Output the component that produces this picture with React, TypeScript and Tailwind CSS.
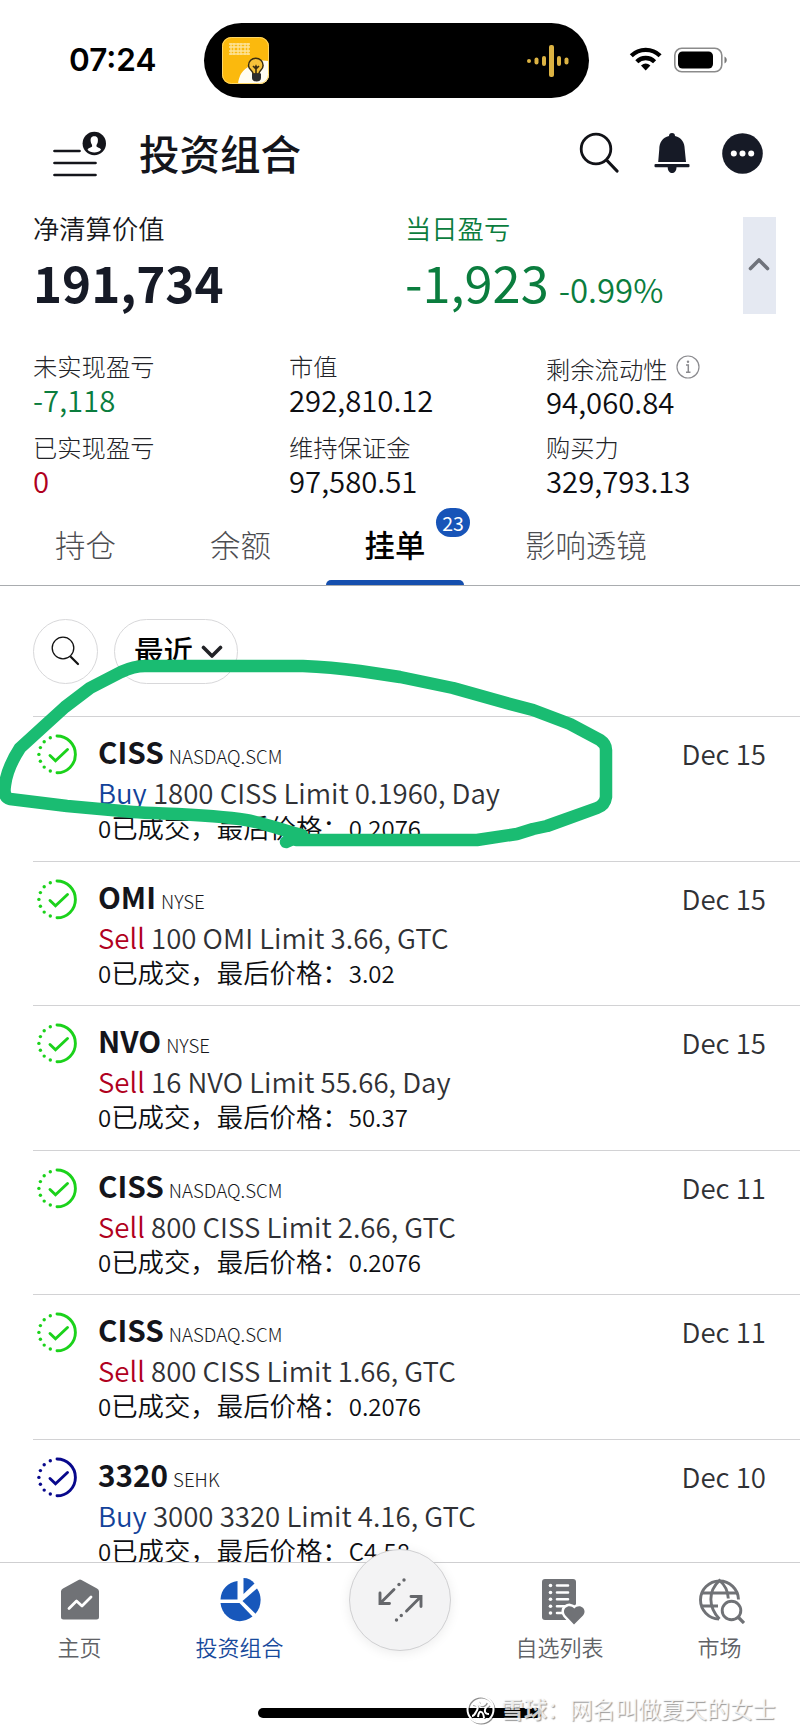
import type { FC } from "react";

type Stat = {
	label: string;
	value: string;
	color?: string;
	info?: boolean;
};

type Order = {
	symbol: string;
	exchange: string;
	side: "Buy" | "Sell";
	detail: string;
	last: string;
	date: string;
	color: string;
};

const stats: Stat[] = [
	{ label: "未实现盈亏", value: "-7,118", color: "text-[#0b7d3e]" },
	{ label: "市值", value: "292,810.12" },
	{ label: "剩余流动性", value: "94,060.84", info: true },
	{ label: "已实现盈亏", value: "0", color: "text-[#b00020]" },
	{ label: "维持保证金", value: "97,580.51" },
	{ label: "购买力", value: "329,793.13" },
];

const GREEN = "#1bd21b";
const NAVY = "#08088c";

const orders: Order[] = [
	{ symbol: "CISS", exchange: "NASDAQ.SCM", side: "Buy", detail: "1800 CISS Limit 0.1960, Day", last: "0.2076", date: "Dec 15", color: GREEN },
	{ symbol: "OMI", exchange: "NYSE", side: "Sell", detail: "100 OMI Limit 3.66, GTC", last: "3.02", date: "Dec 15", color: GREEN },
	{ symbol: "NVO", exchange: "NYSE", side: "Sell", detail: "16 NVO Limit 55.66, Day", last: "50.37", date: "Dec 15", color: GREEN },
	{ symbol: "CISS", exchange: "NASDAQ.SCM", side: "Sell", detail: "800 CISS Limit 2.66, GTC", last: "0.2076", date: "Dec 11", color: GREEN },
	{ symbol: "CISS", exchange: "NASDAQ.SCM", side: "Sell", detail: "800 CISS Limit 1.66, GTC", last: "0.2076", date: "Dec 11", color: GREEN },
	{ symbol: "3320", exchange: "SEHK", side: "Buy", detail: "3000 3320 Limit 4.16, GTC", last: "C4.58", date: "Dec 10", color: NAVY },
];

const StatusBar: FC = () => (
	<div className="flex h-[121px] shrink-0 items-center">
		<div className="w-[204px] pb-[2px] pl-[69px] font-['Inter',sans-serif] text-[31.500px] font-semibold leading-none text-black">
			07:24
		</div>
		<div className="flex h-[75px] w-[385px] items-center justify-between rounded-full bg-black pl-[18px] pr-[19px]">
			<svg width="47" height="47" viewBox="0 0 47 47">
				<defs>
					<clipPath id="appIcon">
						<rect width="47" height="47" rx="9" />
					</clipPath>
				</defs>
				<g clipPath="url(#appIcon)">
					<rect width="47" height="47" fill="#fbb90d" />
					<path d="M16 47C18 32 26 31 30 27C34 23 40 23 47 24V47Z" fill="#fffdf2" />
					<g stroke="#fde49a" strokeWidth="1.300" fill="none">
						<path d="M7 7H28M7 10H28M7 14H28M7 17H28" />
						<path d="M9 6V18M12 6V18M16 6V18M19 6V18M23 6V18M26 6V18" />
					</g>
					<path d="M31 37C31 33 26.500 33 26.500 28.500A7.300 7.300 0 0 1 41.100 28.500C41.100 33 37 33 37 37Z" fill="#f6c23a" stroke="#3a2d10" strokeWidth="1.500" />
					<path d="M31 29L33 31L34 29L35 31L37 29M34 31V37" fill="none" stroke="#3a2d10" strokeWidth="1.600" />
					<path d="M30 36.500H39V41C39 43.500 37 44.500 34.500 44.500S30 43.500 30 41Z" fill="#2d2d2d" />
				</g>
				<rect x=".5" y=".5" width="46" height="46" rx="9" fill="none" stroke="#ffd766" />
			</svg>
			<svg width="44" height="34" viewBox="0 0 44 34" fill="#dcb343">
				<circle cx="3" cy="17" r="2" />
				<rect x="8.500" y="13.500" width="4" height="7" rx="2" />
				<rect x="16" y="12" width="4" height="10" rx="2" />
				<rect x="23" y="1" width="5" height="32" rx="2" />
				<rect x="31" y="12" width="4" height="10" rx="2" />
				<rect x="38.500" y="13.500" width="4" height="7" rx="2" />
			</svg>
		</div>
		<svg className="mb-[3px] ml-[40px]" width="34" height="26" viewBox="0 0 34 26" fill="none" stroke="#000" strokeWidth="4.300">
			<path d="M2.300 9.700A20.500 20.500 0 0 1 31.100 9.700" />
			<path d="M7.800 15.700A12.600 12.600 0 0 1 25.600 15.700" />
			<path d="M12 19.400A7.500 7.500 0 0 1 21.400 19.400L16.700 24.500Z" fill="#000" stroke="none" />
		</svg>
		<svg className="mb-[2px] ml-[10px]" width="54" height="26" viewBox="0 0 54 26">
			<rect x="1.800" y="1.300" width="47" height="23.500" rx="7" fill="none" stroke="#8b8b8b" strokeWidth="1.600" />
			<rect x="5" y="4.500" width="35" height="17" rx="4.500" />
			<path d="M51.500 9.500C54.500 11 54.500 15 51.500 16.500Z" fill="#777" />
		</svg>
	</div>
);

const Header: FC = () => (
	<header className="flex h-[66px] shrink-0 items-center pb-[2px] pl-[52px] pr-[37px]">
		<svg width="56" height="48" viewBox="0 0 56 48">
			<path d="M2.500 22H27.500M2.500 34H43.500M2.500 46H43.500" stroke="#14151b" strokeWidth="2.700" strokeLinecap="round" />
			<circle cx="42.300" cy="14.500" r="11.700" fill="#14151b" />
			<path d="M42.300 7.300C38.800 7.300 38.300 10 38.800 13C39.100 14.700 40.200 15.500 40.200 17C40.200 18.500 36 18.700 35.600 20.700C38.500 24.300 46.200 24.300 49 20.700C48.600 18.700 44.400 18.500 44.400 17C44.400 15.500 45.500 14.700 45.800 13C46.300 10 45.800 7.300 42.300 7.300Z" fill="#fff" />
		</svg>
		<h1 className="ml-[31px] flex-1 pb-[1px] text-[40.500px] font-medium leading-[60px] text-[#14151b]">投资组合</h1>
		<svg width="40" height="42" viewBox="0 0 40 42" fill="none" stroke="#111217" strokeLinecap="round">
			<circle cx="17" cy="17" r="14.800" strokeWidth="2.800" />
			<path d="M28 28.500L38 39" strokeWidth="3.200" />
		</svg>
		<svg className="ml-[35px]" width="36" height="42" viewBox="0 0 36 42" fill="#161a26">
			<path d="M15 4A3 3 0 0 1 21 4C27.500 5.500 30.700 10.500 30.700 17L32 30H4.200L5.300 17C5.300 10.500 8.500 5.500 15 4Z" />
			<rect x="0.500" y="32" width="35" height="3.200" rx="1" />
			<path d="M13.700 35H22.500C22.500 43 13.700 43 13.700 35Z" />
		</svg>
		<svg className="ml-[32px]" width="41" height="41" viewBox="0 0 41 41">
			<circle cx="20.500" cy="20.500" r="20.300" fill="#161a26" />
			<g fill="#fff">
				<circle cx="11.800" cy="20.500" r="3" />
				<circle cx="20.500" cy="20.500" r="3" />
				<circle cx="29.200" cy="20.500" r="3" />
			</g>
		</svg>
	</header>
);

const Summary: FC = () => (
	<section className="flex h-[148px] shrink-0 pl-[33px] pr-[24px] pt-[23px]">
		<div className="w-[372px]">
			<div className="pt-[1px] text-[26.300px] font-[350] leading-[33px] text-[#17181c]">净清算价值</div>
			<div className="text-[49.300px] font-bold leading-[75px] text-[#161a26]">191,734</div>
		</div>
		<div className="flex-1 text-[#0b7d3e]">
			<div className="pt-[1px] text-[26.300px] font-[350] leading-[33px]">当日盈亏</div>
			<div className="flex items-baseline whitespace-nowrap leading-[75px]">
				<span className="text-[50.500px]">-1,923</span>
				<span className="ml-[10px] text-[33px] font-[350]">-0.99%</span>
			</div>
		</div>
		<div className="mt-[7px] flex h-[97px] w-[33px] items-center justify-center bg-[#e5e9f2] pb-[3px]">
			<svg className="-ml-px" width="22" height="14" viewBox="0 0 22 14" fill="none" stroke="#6f737b" strokeWidth="3.600" strokeLinecap="round" strokeLinejoin="round">
				<path d="M2.500 11.500L11 3L19.500 11.500" />
			</svg>
		</div>
	</section>
);

const Stats: FC = () => (
	<section className="grid h-[169px] shrink-0 grid-cols-[256px_257px_1fr] grid-rows-[81px_82px] pl-[33px] pt-[14px]">
		{stats.map((stat) => (
			<div key={stat.label}>
				<div className={`flex items-center text-[24.300px] font-light leading-[34px] text-[#222328] ${stat.info ? "h-[35px] pt-[4px]" : "h-[33px]"}`}>
					{stat.label}
					{stat.info && (
						<svg className="mb-[4px] ml-[9px]" width="24" height="24" viewBox="0 0 24 24" fill="none" stroke="#8b8b8f" strokeWidth="1.200">
							<circle cx="12" cy="12" r="11" />
							<path d="M10 10H12.300V17M10 17.300H14.500" strokeWidth="1.500" />
							<circle cx="12" cy="6.800" r="1.200" fill="#8b8b8f" stroke="none" />
						</svg>
					)}
				</div>
				<div className={`text-[29.300px] font-[350] leading-[34px] ${stat.color ?? "text-[#0d0e12]"}`}>{stat.value}</div>
			</div>
		))}
	</section>
);

const Tabs: FC = () => (
	<nav className="flex h-[82px] shrink-0 items-end border-b border-[#a9acaf] text-[30.400px] font-light leading-[46px] text-[#4c4d51]">
		<div className="h-[64px] w-[155px] pl-[55px]">持仓</div>
		<div className="h-[64px] w-[171px] pl-[55px]">余额</div>
		<div className="relative flex h-[64px] w-[138px] flex-col items-center justify-between font-medium text-black">
			挂单
			<div className="h-[5px] w-full rounded-t-[5px] bg-[#154fae]" />
			<span className="absolute -top-[13px] left-[110px] flex h-[29px] w-[34px] items-center justify-center rounded-full bg-[#1754b8] text-[19.500px] font-normal text-white">
				23
			</span>
		</div>
		<div className="h-[64px] pl-[61px]">影响透镜</div>
	</nav>
);

const Filters: FC = () => (
	<div className="flex h-[130px] shrink-0 items-center gap-[16px] pl-[33px]">
		<div className="flex h-[65px] w-[65px] items-center justify-center rounded-full border border-[#d8d8da]">
			<svg width="29" height="30" viewBox="0 0 29 30" fill="none" stroke="#111" strokeLinecap="round">
				<circle cx="12" cy="12" r="10.800" strokeWidth="1.300" />
				<path d="M20 21L27 28" strokeWidth="2.200" />
			</svg>
		</div>
		<div className="flex h-[65px] w-[124px] items-center rounded-full border border-[#d8d8da] pl-[19px] text-[29.500px] font-medium text-black">
			<span className="pb-[4px]">最近</span>
			<svg className="ml-[8px] mt-[1px]" width="22" height="14" viewBox="0 0 22 14" fill="none" stroke="#222327" strokeWidth="3.600" strokeLinecap="round" strokeLinejoin="round">
				<path d="M2.500 2.500L11 11L19.500 2.500" />
			</svg>
		</div>
	</div>
);

const OrderIcon: FC<{ color: string }> = ({ color }) => (
	<svg className="mt-[17px] shrink-0" width="41" height="41" viewBox="0 0 41 41" fill="none" stroke={color} strokeLinecap="round">
		<path d="M20 2A18.400 18.400 0 0 1 20 38.800" strokeWidth="2.900" />
		<path d="M13 21.500L18.500 26.800L30.500 15.500" strokeWidth="2.900" />
		<g fill={color} stroke="none">
			<circle cx="13.300" cy="3.800" r="1.700" />
			<circle cx="7.200" cy="7.700" r="1.700" />
			<circle cx="3.400" cy="13.600" r="1.700" />
			<circle cx="1.900" cy="20.400" r="1.700" />
			<circle cx="3.400" cy="27.200" r="1.700" />
			<circle cx="7.200" cy="33.100" r="1.700" />
			<circle cx="13.300" cy="37" r="1.700" />
		</g>
	</svg>
);

const OrderRow: FC<{ order: Order }> = ({ order }) => (
	<li className="ml-[33px] flex h-[144.600px] shrink-0 border-t border-[#d2d2d4] pl-[4px] pr-[34px]">
		<OrderIcon color={order.color} />
		<div className="ml-[20px] flex-1 whitespace-nowrap pt-[14px]">
			<div className="flex h-[43px] items-baseline gap-[5px] leading-[42px]">
				<span className="text-[29.700px] font-bold text-[#14151b]">{order.symbol}</span>
				<span className="text-[18.700px] font-light text-[#17181c]">{order.exchange}</span>
			</div>
			<div className="text-[27.600px] font-[350] leading-[37px] text-[#303135]">
				<span className={order.side === "Buy" ? "text-[#12429a]" : "text-[#b00020]"}>{order.side}</span> {order.detail}
			</div>
			<div className="flex h-[32px] items-baseline text-[26.400px] font-[350] leading-[32px] text-[#0d0e12]">
				<span className="text-[24px]">0</span>已成交，最后价格：<span className="text-[24px]">{order.last}</span>
			</div>
		</div>
		<div className="pt-[15px] text-[27.600px] font-[350] leading-[42px] text-[#303135]">{order.date}</div>
	</li>
);

const HomeIcon = () => (
	<svg width="40" height="46" viewBox="0 0 40 46">
		<path d="M1 14.500Q1 12.500 3 11.500L18.500 3Q20 2.200 21.500 3L37 11.500Q39 12.500 39 14.500V40Q39 42.500 36.500 42.500H3.500Q1 42.500 1 40Z" fill="#707276" />
		<path d="M9 31.500L16.500 24L22 29L31 20" fill="none" stroke="#fff" strokeWidth="2.800" strokeLinecap="round" strokeLinejoin="round" />
	</svg>
);

const PieIcon = () => (
	<svg width="42" height="46" viewBox="0 0 42 46" fill="#1757bb">
		<path d="M18.500 4V22.500H1.500C1.800 12.500 9 5 18.500 4Z" />
		<path d="M1.500 26H20.500L33.500 39.500C20 50 3 41.500 1.500 26Z" />
		<path d="M24.500 1C29 1 33 3 35.500 6.500L24.500 17Z" />
		<path d="M38 11.500C43.500 19 42.500 30 36.500 36.800L23.500 24Z" />
	</svg>
);

const WatchIcon = () => (
	<svg className="ml-[5px]" width="44" height="49" viewBox="0 0 44 49">
		<rect x="1" y="2" width="34" height="41" rx="3" fill="#707276" />
		<g stroke="#fff" strokeWidth="2.600" strokeLinecap="round">
			<path d="M16 8.500H27M16 15.500H27M16 22.300H27M16 29.200H24M16 36H22" />
		</g>
		<g fill="#fff">
			<circle cx="9.500" cy="8.500" r="1.800" />
			<circle cx="9.500" cy="15.500" r="1.800" />
			<circle cx="9.500" cy="22.300" r="1.800" />
			<circle cx="9.500" cy="29.200" r="1.800" />
			<circle cx="9.500" cy="36" r="1.800" />
		</g>
		<path d="M33 47.500L24.500 38.500C19.500 32 28 25.500 33.300 31.500C38.500 25.500 47 32 42 38.500Z" fill="#707276" stroke="#fff" strokeWidth="5" paintOrder="stroke" />
	</svg>
);

const MarketIcon = () => (
	<svg className="ml-[4px]" width="46" height="47" viewBox="0 0 46 47" fill="none" stroke="#707276" strokeWidth="2.900">
		<path d="M20 42A19 19 0 1 1 39.500 22.500" />
		<path d="M20.500 42C9 30 9 14 20.500 3.500C26 8 29 14 29.300 21.500" />
		<path d="M2.500 16H38.500M2.500 29H19" />
		<circle cx="32.500" cy="33.500" r="9.300" />
		<path d="M39.500 40.500L45 46" strokeWidth="3.300" />
	</svg>
);

const NavItem: FC<{ label: string; active?: boolean; icon: FC }> = ({ label, active, icon: Icon }) => (
	<div className="flex w-[160px] flex-col items-center pt-[14px]">
		<div className="flex h-[46px]">
			<Icon />
		</div>
		<span className={`-ml-px mt-[7px] text-[22px] font-[350] leading-[32px] ${active ? "text-[#174a9c]" : "text-[#606266]"}`}>{label}</span>
	</div>
);

const BottomNav: FC = () => (
	<nav className="relative flex h-[173px] shrink-0 border-t border-[#cfcfd1] bg-white">
		<NavItem label="主页" icon={HomeIcon} />
		<NavItem label="投资组合" active icon={PieIcon} />
		<div className="w-[160px]">
			<div className="relative mx-auto -mt-[14px] flex h-[102px] w-[102px] items-center justify-center rounded-full border border-[#d0d0d2] bg-[#f3f3f4] shadow-[0_2px_12px_rgba(0,0,0,0.08)]">
				<svg width="46" height="44" viewBox="0 0 46 44" fill="none" stroke="#65676b" strokeWidth="2.900" strokeLinecap="round">
					<path d="M17 11.500L3.500 25M3 15V25.500H12.500" />
					<path d="M29.500 33L43.500 19M34 18.500H44V28.500" />
					<g fill="#65676b" stroke="none">
						<circle cx="27" cy="2" r="1.700" />
						<circle cx="22" cy="6.500" r="1.700" />
						<circle cx="19.500" cy="42" r="1.700" />
						<circle cx="24.300" cy="37.500" r="1.700" />
					</g>
				</svg>
			</div>
		</div>
		<NavItem label="自选列表" icon={WatchIcon} />
		<NavItem label="市场" icon={MarketIcon} />
		<div className="absolute left-[258px] top-[145px] h-[10px] w-[284px] rounded-full bg-black" />
		<div className="absolute left-[466px] top-[129px] flex items-center gap-[6px] whitespace-nowrap text-[22.900px] leading-[32px] text-white/80 [text-shadow:1px_1px_1px_rgba(0,0,0,0.4)]">
			<svg width="29" height="29" viewBox="0 0 29 29" fill="none" stroke="#fff" strokeWidth="2" className="mt-[3px] drop-shadow-[1px_1px_0.500px_rgba(0,0,0,0.45)]">
				<circle cx="14.500" cy="14.500" r="13" />
				<path d="M6 9C12 9 13 13 10 17C9 19 7 21 6 21M12 6C14 12 18 11 20 7M12 22C13 15 17 15 18 23M23 10C17 14 18 19 23 19" />
			</svg>
			<span>
				<b className="font-bold">雪球</b>：网名叫做夏天的女士
			</span>
		</div>
	</nav>
);

const Highlight: FC = () => (
	<svg className="pointer-events-none absolute left-0 top-0" width="800" height="1735" viewBox="0 0 800 1735" fill="none">
		<path
			d="M286 842L302 835C285 831 265 823 246 820C210 814 160 814 133 812L67 806L10 799Q3 797 5 785Q7 768 20 748L43 727L65 707L90 688L121 672Q134 666 145 666H303Q330 667 360 671L400 677L453 688L510 704L533 710L570 724L600 740Q606 744 606 750V797Q605 805 597 808L547 826L533 829L517 834L477 840H296"
			stroke="#1abc72"
			strokeWidth="12.500"
			strokeLinecap="round"
			strokeLinejoin="round"
		/>
	</svg>
);

export default function App() {
	return (
		<div className="relative flex h-[1735px] w-[800px] flex-col overflow-hidden bg-white font-['Noto_Sans_CJK_SC',sans-serif]">
			<StatusBar />
			<Header />
			<Summary />
			<Stats />
			<Tabs />
			<Filters />
			<ul className="flex min-h-0 flex-1 flex-col overflow-hidden">
				{orders.map((order, i) => (
					<OrderRow key={i} order={order} />
				))}
			</ul>
			<BottomNav />
			<Highlight />
		</div>
	);
}
